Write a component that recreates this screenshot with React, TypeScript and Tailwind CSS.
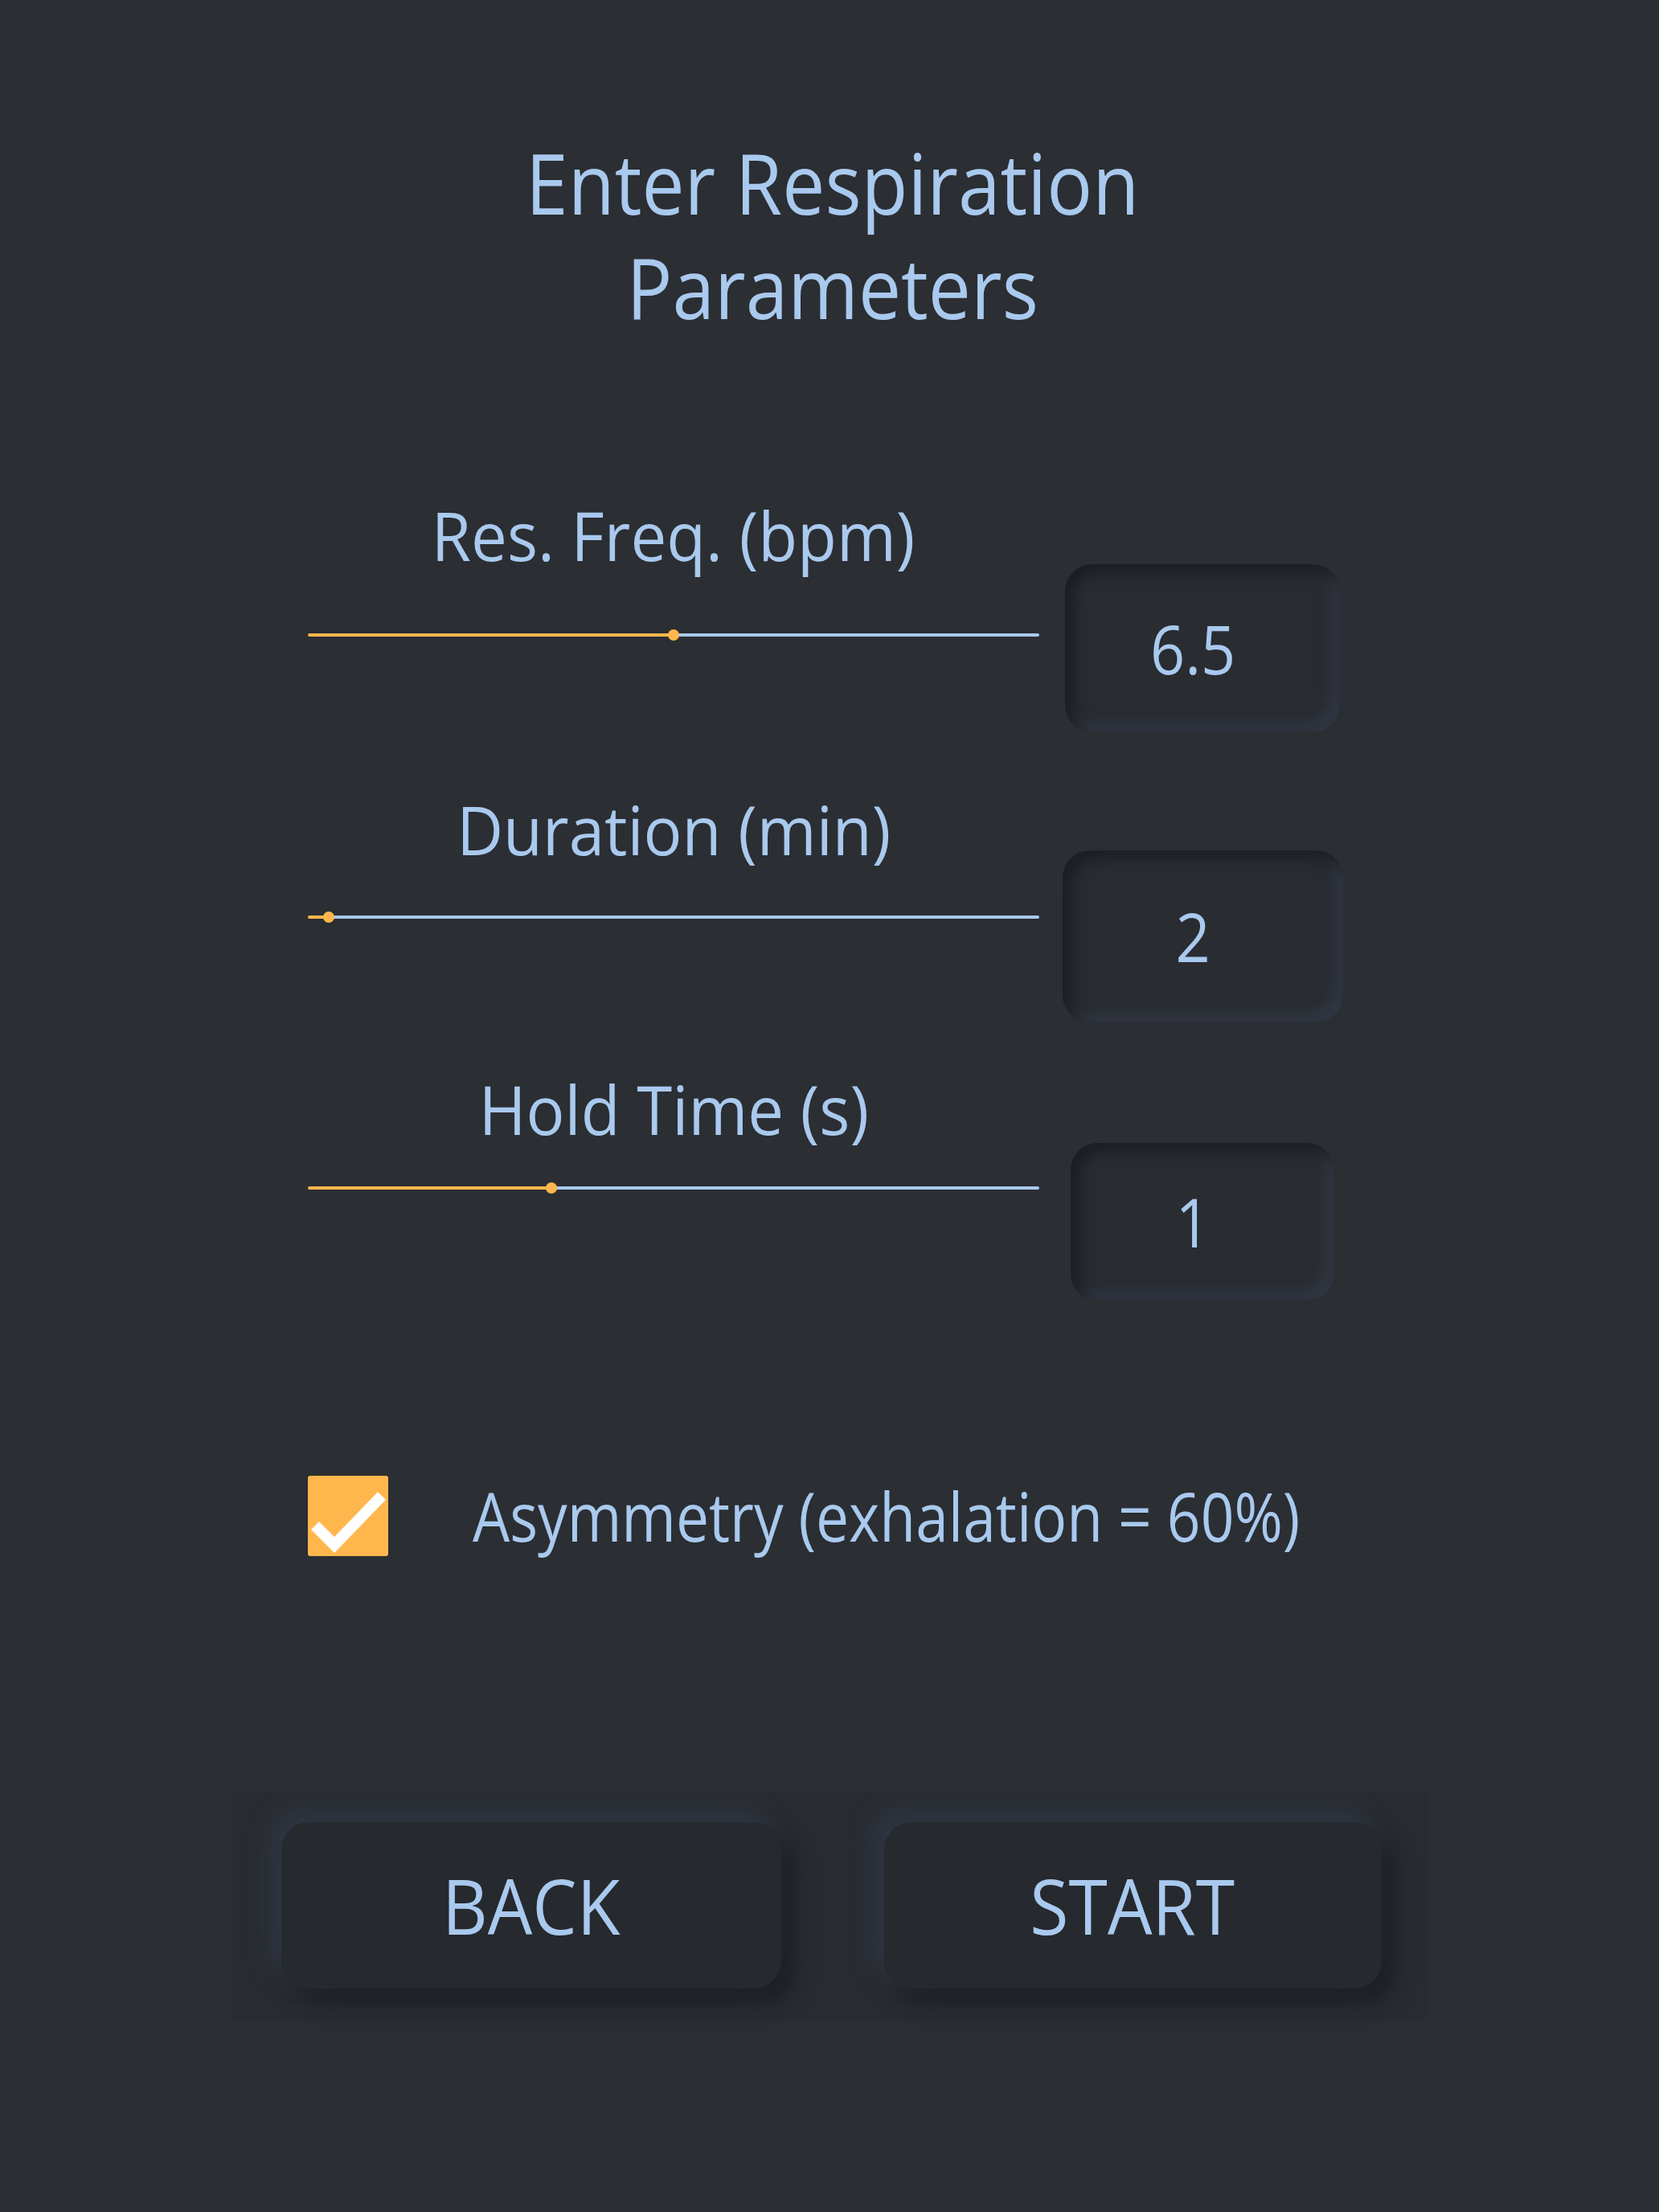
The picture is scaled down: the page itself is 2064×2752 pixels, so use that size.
import React from 'react';

const font = { fontFamily: '"Open Sans", "Noto Sans", sans-serif' };

interface SliderRowProps {
    label: string;
    value: string;
    pct: number;
    rowClass: string;
    sliderClass: string;
    boxClass: string;
}

const Slider: React.FC<{ pct: number; className: string }> = ({ pct, className }) => (
    <div className={`relative w-[910px] h-[14px] flex items-center ${className}`}>
        <div className="h-[4px] bg-[#ffb74d] rounded-full" style={{ width: `${pct}%` }} />
        <div className="h-[4px] flex-1 bg-[#a9c9ee] rounded-full" />
        <div
            className="absolute top-0 w-[14px] h-[14px] -ml-[7px] rounded-full bg-[#ffb74d]"
            style={{ left: `${pct}%` }}
        />
    </div>
);

const SliderRow: React.FC<SliderRowProps> = ({ label, value, pct, rowClass, sliderClass, boxClass }) => (
    <div className={`flex items-start ${rowClass}`}>
        <div className="flex flex-col items-center w-[910px]">
            <div className="text-[84px] leading-[100px] text-[#a9c9ee] scale-x-[0.95]">{label}</div>
            <Slider pct={pct} className={sliderClass} />
        </div>
        <div className="ml-[28px] w-[350px] flex justify-center">
            <div
                className={`flex items-center justify-center pr-6 rounded-[34px] bg-[#292c31] shadow-[inset_10px_10px_18px_#1b1e22,inset_-10px_-10px_18px_#323844] text-[84px] text-[#a9c9ee] ${boxClass}`}
            >
                <span className="scale-x-[0.9]">{value}</span>
            </div>
        </div>
    </div>
);

export default function App() {
    return (
        <div className="min-h-[2752px] w-full bg-[#2b2e33] text-[#a9c9ee]" style={font}>
            {/* Title */}
            <div className="pt-[162px] pl-[8px] flex flex-col items-center text-[104px] leading-[130px] scale-x-[0.91]">
                <div>Enter Respiration</div>
                <div>Parameters</div>
            </div>

            {/* Parameters */}
            <div className="pl-[383px]">
                <SliderRow
                    label="Res. Freq. (bpm)"
                    value="6.5"
                    pct={50}
                    rowClass="mt-[194px]"
                    sliderClass="mt-[67px]"
                    boxClass="mt-[86px] w-[342px] h-[209px]"
                />
                <SliderRow
                    label="Duration (min)"
                    value="2"
                    pct={2.9}
                    rowClass="mt-[71px]"
                    sliderClass="mt-[52px]"
                    boxClass="mt-[76px] w-[349px] h-[214px]"
                />
                <SliderRow
                    label="Hold Time (s)"
                    value="1"
                    pct={33.3}
                    rowClass="mt-[58px]"
                    sliderClass="mt-[41px]"
                    boxClass="mt-[92px] w-[328px] h-[196px]"
                />

                {/* Asymmetry checkbox */}
                <div className="mt-[218px] flex items-center">
                    <div className="w-[100px] h-[100px] rounded-[3px] bg-[#ffb74d] flex items-center justify-center">
                        <svg width="100" height="100" viewBox="0 0 100 100">
                            <path d="M9 62 L33 86 L92 25" fill="none" stroke="#ffffff" strokeWidth="14" />
                        </svg>
                    </div>
                    <div className="ml-[105px] text-[84px] leading-[100px] scale-x-[0.87] origin-left">
                        Asymmetry (exhalation = 60%)
                    </div>
                </div>
            </div>

            {/* Buttons */}
            <div className="mt-[294px] mx-auto w-[1491px] pl-[63px] pr-[59px] pt-[37px] pb-[41px] bg-[#292c31] flex justify-between">
                <button className="w-[622px] h-[207px] rounded-[34px] bg-[#26292e] shadow-[-14px_-14px_30px_#2f3643,16px_18px_30px_#1c1f23] text-[95px] text-[#a9c9ee]">
                    <span className="inline-block scale-x-[0.925]">BACK</span>
                </button>
                <button className="w-[619px] h-[207px] rounded-[34px] bg-[#26292e] shadow-[-14px_-14px_30px_#2f3643,16px_18px_30px_#1c1f23] text-[95px] text-[#a9c9ee]">
                    <span className="inline-block scale-x-[0.925]">START</span>
                </button>
            </div>
        </div>
    );
}
